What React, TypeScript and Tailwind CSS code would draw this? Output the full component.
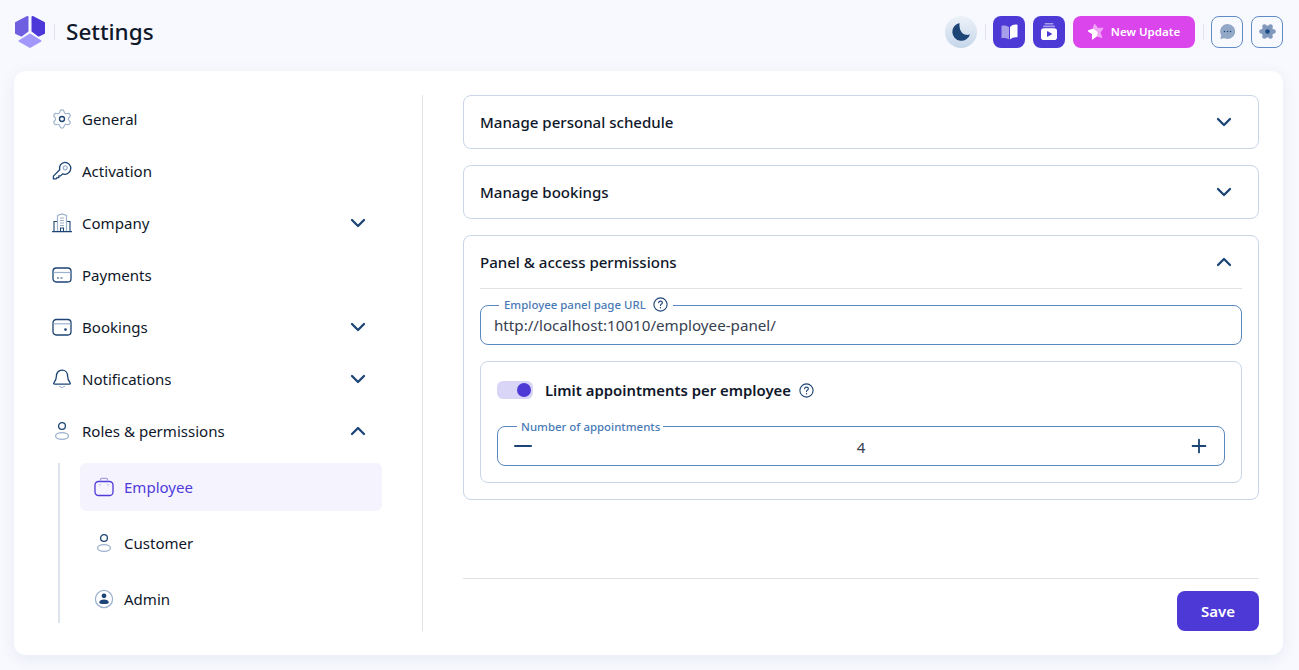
import { ChevronDown, ChevronUp, Plus } from 'lucide-react';
import type { ReactNode } from 'react';

const navy = '#1c4474';
const soft = '#9db2cf';

function GeneralIcon() {
  return (
    <svg width="20" height="20" viewBox="0 0 24 24" fill="none">
      <path
        d="M9.671 4.136a2.34 2.34 0 0 1 4.659 0 2.34 2.34 0 0 0 3.319 1.915 2.34 2.34 0 0 1 2.33 4.033 2.34 2.34 0 0 0 0 3.831 2.34 2.34 0 0 1-2.33 4.033 2.34 2.34 0 0 0-3.319 1.915 2.34 2.34 0 0 1-4.659 0 2.34 2.34 0 0 0-3.32-1.915 2.34 2.34 0 0 1-2.33-4.033 2.34 2.34 0 0 0 0-3.831A2.34 2.34 0 0 1 6.35 6.051a2.34 2.34 0 0 0 3.32-1.915"
        stroke={soft}
        strokeWidth="1.300"
        transform="translate(-1.200 -1.200) scale(1.100)"
      />
      <circle cx="12" cy="12" r="3" stroke={navy} strokeWidth="1.600" />
    </svg>
  );
}

function KeyIcon() {
  return (
    <svg width="20" height="20" viewBox="0 0 20 20" fill="none">
      <path
        d="M12.600 1.300a6 6 0 1 1-2 11.600l-2 2H6.800v1.800H5l-.9 1.200H1.400v-2.800l6.300-6.300a6 6 0 0 1 4.900-7.500z"
        stroke={navy}
        strokeWidth="1.300"
        strokeLinejoin="round"
      />
      <circle cx="13.200" cy="6.800" r="2" stroke={soft} strokeWidth="1.200" />
    </svg>
  );
}

function CompanyIcon() {
  return (
    <svg width="20" height="20" viewBox="0 0 20 20" fill="none">
      <path d="M.5 18.600h19" stroke={navy} strokeWidth="1.300" strokeLinecap="round" />
      <path d="M2 18V8.500h3.500M18 18V8.500h-3.500" stroke={navy} strokeWidth="1.100" />
      <path d="M5.500 18V2.500L10 1l4.500 1.500V18" stroke={soft} strokeWidth="1.200" />
      <path d="M8 5h4M8 7.500h4M8 10h4M8 12.500h4" stroke={soft} strokeWidth="1" />
      <path d="M8.500 18v-3h3v3" stroke={navy} strokeWidth="1.100" />
    </svg>
  );
}

function CardIcon() {
  return (
    <svg width="20" height="20" viewBox="0 0 20 20" fill="none">
      <rect x="1" y="3" width="18" height="14" rx="3.200" stroke={navy} strokeWidth="1.300" />
      <path d="M1.500 7.500h17" stroke={soft} strokeWidth="1.200" />
      <path d="M5 13h2M8.500 13h2" stroke={navy} strokeWidth="1" />
    </svg>
  );
}

function WalletIcon() {
  return (
    <svg width="20" height="20" viewBox="0 0 20 20" fill="none">
      <rect x="1" y="2.500" width="18" height="15.500" rx="3.200" stroke={navy} strokeWidth="1.300" />
      <path d="M1.500 6.800h17" stroke={soft} strokeWidth="1.200" />
      <circle cx="13.500" cy="12.600" r="1.300" fill={navy} />
    </svg>
  );
}

function BellIcon() {
  return (
    <svg width="20" height="20" viewBox="0 0 20 20" fill="none">
      <path
        d="M10 1.200c-3.600 0-5.600 2.800-5.600 6 0 3.400-1.200 5-2.500 6.600-.5.700-.2 1.400.7 1.400h14.800c.9 0 1.200-.7.700-1.400-1.300-1.600-2.500-3.200-2.500-6.600 0-3.200-2-6-5.600-6z"
        stroke={navy}
        strokeWidth="1.300"
      />
      <path d="M7.500 17.400c1.500 1.200 3.500 1.200 5 0" stroke={soft} strokeWidth="1.200" strokeLinecap="round" />
    </svg>
  );
}

function PersonIcon() {
  return (
    <svg width="20" height="20" viewBox="0 0 20 20" fill="none">
      <circle cx="10" cy="5" r="3.400" stroke={navy} strokeWidth="1.300" />
      <ellipse cx="10" cy="15" rx="6.400" ry="3.400" stroke={soft} strokeWidth="1.300" />
    </svg>
  );
}

function BagIcon() {
  return (
    <svg width="20" height="20" viewBox="0 0 20 20" fill="none">
      <rect x="1" y="4.500" width="18" height="14" rx="3.600" stroke="#4f3bd9" strokeWidth="1.300" />
      <path d="M6.500 4.300V2.600c0-.7.500-1.200 1.200-1.200h4.600c.7 0 1.200.5 1.200 1.200v1.700" stroke="#a89eeb" strokeWidth="1.200" />
      <path d="M6 7.600v.4M14 7.600v.4" stroke="#a89eeb" strokeWidth="1.200" strokeLinecap="round" />
    </svg>
  );
}

function AdminIcon() {
  return (
    <svg width="20" height="20" viewBox="0 0 20 20" fill="none">
      <circle cx="10" cy="10" r="8.600" stroke={soft} strokeWidth="1.300" />
      <circle cx="10" cy="6.800" r="2.400" fill={navy} />
      <path d="M5.200 13.400c0-1.900 2.200-3 4.800-3s4.800 1.100 4.800 3c0 1-2.200 1.600-4.800 1.600s-4.800-.6-4.800-1.600z" fill={navy} />
    </svg>
  );
}

function HelpIcon() {
  return (
    <svg width="15" height="15" viewBox="0 0 15 15" fill="none">
      <circle cx="7.500" cy="7.500" r="6.600" stroke={navy} strokeWidth="1.100" />
      <path
        d="M5.600 5.800c.1-1.100.9-1.700 1.900-1.700s1.900.6 1.900 1.600c0 1.300-1.900 1.400-1.900 2.800"
        stroke={navy}
        strokeWidth="1.100"
        strokeLinecap="round"
      />
      <circle cx="7.500" cy="10.700" r=".7" fill={navy} />
    </svg>
  );
}

function Logo() {
  return (
    <svg width="32" height="34" viewBox="0 0 32 34" fill="none">
      <path d="M13.500 2 2 8v10l5.500 2.500 6-4.500z" fill="#6f5fe0" stroke="#6f5fe0" strokeWidth="2" strokeLinejoin="round" />
      <path d="M18.500 2 30 8v10l-5.500 2.500-6-4.500z" fill="#4c37d8" stroke="#4c37d8" strokeWidth="2" strokeLinejoin="round" />
      <path d="M16 19.500l10.500 6.500L16 32 5.500 26z" fill="#a297fb" stroke="#a297fb" strokeWidth="2" strokeLinejoin="round" />
    </svg>
  );
}

function MoonIcon() {
  return (
    <svg width="20" height="20" viewBox="0 0 20 20">
      <path d="M8.500 1a9 9 0 1 0 10.500 11.200c-1.200.6-2.600.8-3.800.6C10.800 12.200 8 8 8.500 1z" fill="#1c4474" />
    </svg>
  );
}

function BookIcon() {
  return (
    <svg width="17" height="16" viewBox="0 0 17 16">
      <path d="M.5 2c2.800-.8 5.300-.4 7.500 1.200V15.500C5.800 14 3.300 13.600.5 14.300z" fill="#a79de9" />
      <path d="M16.500 .7c-2.800-.6-5.300 0-7.500 2.300V15.500c2.200-2 4.700-2.700 7.500-2.200z" fill="#fff" />
    </svg>
  );
}

function VideoStackIcon() {
  return (
    <svg width="16" height="17" viewBox="0 0 16 17">
      <rect x="3.500" y="0" width="9" height="1.400" rx=".7" fill="#a79de9" />
      <rect x="2" y="2.600" width="12" height="1.600" rx=".8" fill="#a79de9" />
      <rect x="0" y="5.200" width="16" height="11.800" rx="2.800" fill="#fff" />
      <path d="M6.500 8.600v4.800l4-2.400z" fill="#4d3ad6" stroke="#4d3ad6" strokeLinejoin="round" />
    </svg>
  );
}

function StarIcon() {
  return (
    <svg width="18" height="18" viewBox="0 0 18 18">
      <path
        d="M7.600 1.100 10.750 5.400 16.100 5.200 13 9.600 14.800 14.600 9.700 12.900 5.500 16.200 5.500 10.900 1.100 7.900 6.100 6.200z"
        fill="#f0a4f7"
        stroke="#f0a4f7"
        strokeLinejoin="round"
      />
      <path d="M1.100 7.900 6.100 6.200 10 9 9.700 12.900 5.500 16.200 5.500 10.900z" fill="#fff" stroke="#fff" strokeLinejoin="round" />
    </svg>
  );
}

function ChatIcon() {
  return (
    <svg width="17" height="17" viewBox="0 0 18 18">
      <path d="M9 1a8 8 0 1 1-3.400 15.200L1.500 17l.8-4A8 8 0 0 1 9 1z" fill="#93a8c6" />
      <circle cx="5.800" cy="9" r=".8" fill={navy} />
      <circle cx="9" cy="9" r=".8" fill={navy} />
      <circle cx="12.200" cy="9" r=".8" fill={navy} />
    </svg>
  );
}

function GearIcon() {
  return (
    <svg width="17" height="17" viewBox="0 0 18 18">
      <g fill="#7f98bb">
        <circle cx="9" cy="9" r="6.400" />
        <circle cx="5.800" cy="3.600" r="2.400" />
        <circle cx="12.200" cy="3.600" r="2.400" />
        <circle cx="5.800" cy="14.400" r="2.400" />
        <circle cx="12.200" cy="14.400" r="2.400" />
        <circle cx="2.600" cy="9" r="2.400" />
        <circle cx="15.400" cy="9" r="2.400" />
      </g>
      <circle cx="9" cy="9" r="2.400" fill="#1a4a86" />
    </svg>
  );
}

function NavRow({ icon, label, open }: { icon: ReactNode; label: string; open?: boolean }) {
  return (
    <div className="flex h-12 items-center gap-[10px] rounded-lg pl-[14px] pr-3 text-[15.05px] text-[#0f172a]">
      <span className="flex w-5 shrink-0 justify-center">{icon}</span>
      <span className="flex-1">{label}</span>
      {open === true && <ChevronUp size={24} color={navy} strokeWidth={2.300} />}
      {open === false && <ChevronDown size={24} color={navy} strokeWidth={2.300} />}
    </div>
  );
}

function SubRow({ icon, label, active }: { icon: ReactNode; label: string; active?: boolean }) {
  return (
    <div
      className={
        active
          ? 'flex h-12 items-center gap-[10px] rounded-md bg-[#f5f3fe] px-[14px] text-[15.05px] text-[#4f3bd9]'
          : 'flex h-12 items-center gap-[10px] rounded-md px-[14px] text-[15.05px] text-[#0f172a]'
      }
    >
      <span className="flex w-5 shrink-0 justify-center">{icon}</span>
      <span>{label}</span>
    </div>
  );
}

function AccordionHead({ title, open }: { title: string; open?: boolean }) {
  return (
    <div className="flex h-[52px] items-center justify-between pr-[6px] text-[15.05px] font-medium text-[#0f172a]">
      <span>{title}</span>
      {open ? (
        <ChevronUp size={24} color={navy} strokeWidth={2.300} />
      ) : (
        <ChevronDown size={24} color={navy} strokeWidth={2.300} />
      )}
    </div>
  );
}

export default function App() {
  return (
    <div className="flex h-screen flex-col overflow-hidden bg-[#f8f9fe] pb-[15px] font-['Noto_Sans',sans-serif]">
      <header className="flex h-[71px] shrink-0 items-center justify-between pb-[8px] pl-[14px] pr-4">
        <div className="flex items-center">
          <Logo />
          <div className="ml-2 h-4 w-px bg-[#dfe3ea]" />
          <h1 className="ml-[11px] text-[22.500px] font-medium text-[#0f172a]">Settings</h1>
        </div>
        <div className="flex items-center gap-2">
          <button className="flex h-8 w-8 items-center justify-center rounded-full bg-gradient-to-b from-[#edf2f8] to-[#c5d6ea]">
            <MoonIcon />
          </button>
          <div className="-mr-px h-4 w-px bg-[#dfe3ea]" />
          <button className="flex h-8 w-8 items-center justify-center rounded-lg bg-[#4d3ad6]">
            <BookIcon />
          </button>
          <button className="flex h-8 w-8 items-center justify-center rounded-lg bg-[#4d3ad6]">
            <VideoStackIcon />
          </button>
          <button className="flex h-8 w-[122px] items-center justify-center gap-[6px] rounded-lg bg-[#da46ec] pr-px text-[11.500px] font-semibold text-white">
            <StarIcon />
            New Update
          </button>
          <div className="-mr-px h-4 w-px bg-[#dfe3ea]" />
          <button className="flex h-8 w-8 items-center justify-center rounded-lg border border-[#5f8cc4]">
            <ChatIcon />
          </button>
          <button className="flex h-8 w-8 items-center justify-center rounded-lg border border-[#5f8cc4]">
            <GearIcon />
          </button>
        </div>
      </header>

      <main className="mx-4 ml-[14px] flex min-h-0 flex-1 rounded-xl bg-white p-6 shadow-[0_4px_16px_rgba(40,60,120,0.08)]">
        <aside className="w-[385px] shrink-0 border-r border-[#e2e2e2] pr-10">
          <div className="flex flex-col gap-1">
            <NavRow icon={<GeneralIcon />} label="General" />
            <NavRow icon={<KeyIcon />} label="Activation" />
            <NavRow icon={<CompanyIcon />} label="Company" open={false} />
            <NavRow icon={<CardIcon />} label="Payments" />
            <NavRow icon={<WalletIcon />} label="Bookings" open={false} />
            <NavRow icon={<BellIcon />} label="Notifications" open={false} />
            <NavRow icon={<PersonIcon />} label="Roles & permissions" open />
          </div>
          <div className="ml-5 mt-2 flex flex-col gap-2 border-l-2 border-[#dde3ea] pl-5">
            <SubRow icon={<BagIcon />} label="Employee" active />
            <SubRow icon={<PersonIcon />} label="Customer" />
            <SubRow icon={<AdminIcon />} label="Admin" />
          </div>
        </aside>

        <section className="ml-10 flex min-w-0 flex-1 flex-col">
          <div className="flex flex-1 flex-col gap-4">
            <div className="rounded-lg border border-[#c8d6e8] px-4">
              <AccordionHead title="Manage personal schedule" />
            </div>
            <div className="rounded-lg border border-[#c8d6e8] px-4">
              <AccordionHead title="Manage bookings" />
            </div>
            <div className="rounded-lg border border-[#c8d6e8] px-4 pb-4">
              <AccordionHead title="Panel & access permissions" open />
              <div className="border-t border-[#e2e2e2] pt-4">
                <div className="relative flex h-10 items-center rounded-lg border border-[#5b88c0] px-[13px] text-[15.160px] text-[#374151]">
                  http://localhost:10010/employee-panel/
                  <div className="absolute -top-[10px] left-[18px] flex items-center gap-[7px] bg-white px-[5px] text-[11.450px] font-medium text-[#4a7ab5]">
                    Employee panel page URL
                    <HelpIcon />
                  </div>
                </div>
                <div className="mt-4 rounded-lg border border-[#c8d6e8] p-4">
                  <div className="flex h-6 items-center">
                    <div className="flex h-[18px] w-9 items-center justify-end rounded-md bg-[#d9d5f6] pr-[2px]">
                      <div className="h-[14px] w-[14px] rounded-full bg-[#4d3ad6]" />
                    </div>
                    <span className="ml-3 text-[14.880px] font-semibold text-[#0f172a]">Limit appointments per employee</span>
                    <span className="ml-[8px] flex">
                      <HelpIcon />
                    </span>
                  </div>
                  <div className="relative mt-6 flex h-10 items-center justify-between rounded-lg border border-[#5b88c0] pl-4 pr-[14px] text-[15px] text-[#374151]">
                    <div className="h-[2px] w-[18px] rounded-sm bg-[#1c4474]" />
                    <span className="ml-[2px] pt-[2px]">4</span>
                    <Plus size={22} color={navy} strokeWidth={2} />
                    <div className="absolute -top-[9px] left-[19px] bg-white pl-[4px] pr-[3px] text-[11.450px] font-medium text-[#4a7ab5]">
                      Number of appointments
                    </div>
                  </div>
                </div>
              </div>
            </div>
          </div>
          <div className="flex justify-end border-t border-[#e2e2e2] pt-3">
            <button className="h-10 w-[82px] rounded-lg bg-[#4d3ad6] pt-px text-[15px] font-semibold text-white">Save</button>
          </div>
        </section>
      </main>
    </div>
  );
}
